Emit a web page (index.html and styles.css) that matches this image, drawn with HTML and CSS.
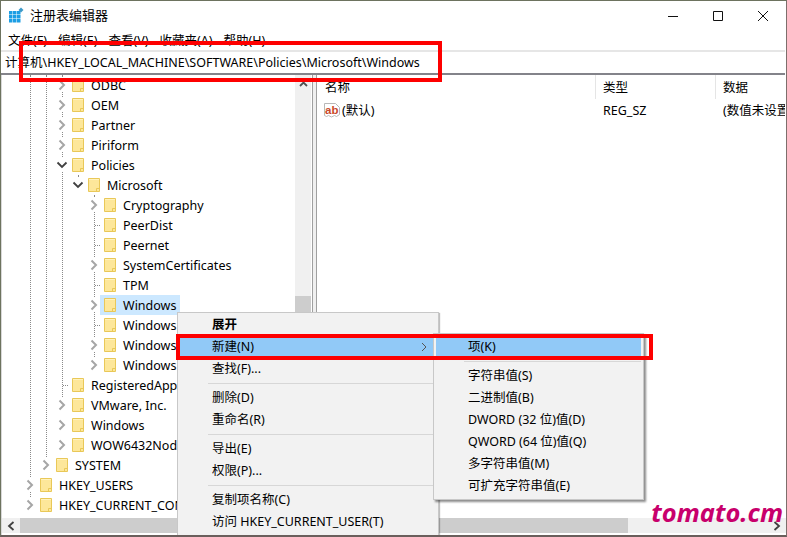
FILE: index.html
```html
<!DOCTYPE html>
<html lang="zh-CN">
<head>
<meta charset="utf-8">
<title>注册表编辑器</title>
<link rel="stylesheet" href="styles.css">
</head>
<body>
<svg class="sprite" aria-hidden="true">
  <symbol id="folder" viewBox="0 0 12 14">
    <path d="M.5.5h11v13H.5z" fill="#fde79a" stroke="#e9c858"/>
    <path d="M1 1h10v1H1z" fill="#fff2bd"/>
    <path d="M8.500 13.500v-3h3" fill="none" stroke="#e9c858"/>
  </symbol>
  <symbol id="closed" viewBox="0 0 8 12">
    <path d="M1.500 1.500 6 6l-4.500 4.500" fill="none" stroke="#a6a6a6" stroke-width="2"/>
  </symbol>
  <symbol id="open" viewBox="0 0 12 8">
    <path d="M1.500 1.500 6 6l4.500-4.500" fill="none" stroke="#404040" stroke-width="1.800"/>
  </symbol>
</svg>
<div class="window">
  <header class="titlebar">
    <svg class="appicon" width="16" height="16" viewBox="0 0 16 16">
      <path d="M1 4h3.500v3.500H1zM5 4h3.500v3.500H5zM9 4h3.500v3.500H9zM1 8h3.500v3.500H1zM5 8h3.500v3.500H5zM9 8h3.500v3.500H9zM1 12h3.500v3.500H1zM5 12h3.500v3.500H5zM9 12h3.500v3.500H9z" fill="#1c9ee4"/>
      <path d="M13 .5 15.500 3 13 5.500 10.500 3z" fill="#3d9ac9"/>
    </svg>
    <span class="title">注册表编辑器</span>
    <div class="controls">
      <span class="control"><svg width="10" height="10" viewBox="0 0 10 10"><path d="M0 5.500h10" stroke="#111"/></svg></span>
      <span class="control"><svg width="10" height="10" viewBox="0 0 10 10"><path d="M.5.500h9v9h-9z" fill="none" stroke="#111"/></svg></span>
      <span class="control"><svg width="10" height="10" viewBox="0 0 10 10"><path d="M0 0l10 10M10 0 0 10" stroke="#111"/></svg></span>
    </div>
  </header>
  <nav class="menubar">
    <span>文件(F)</span><span>编辑(E)</span><span>查看(V)</span><span>收藏夹(A)</span><span>帮助(H)</span>
  </nav>
  <div class="address">计算机\HKEY_LOCAL_MACHINE\SOFTWARE\Policies\Microsoft\Windows</div>
  <main class="panes">
    <section class="treepane">
      <div class="treebody">
        <div class="tree">
          <i class="vline v30"></i><i class="vline v46"></i><i class="vline v62"></i><i class="vline v78"></i><i class="vline v94"></i>
          <div class="row l2"><span class="tw"><svg width="8" height="12"><use href="#closed"/></svg></span><span class="item"><svg class="fd"><use href="#folder"/></svg>ODBC</span></div>
          <div class="row l2"><span class="tw"><svg width="8" height="12"><use href="#closed"/></svg></span><span class="item"><svg class="fd"><use href="#folder"/></svg>OEM</span></div>
          <div class="row l2"><span class="tw"><svg width="8" height="12"><use href="#closed"/></svg></span><span class="item"><svg class="fd"><use href="#folder"/></svg>Partner</span></div>
          <div class="row l2"><span class="tw"><svg width="8" height="12"><use href="#closed"/></svg></span><span class="item"><svg class="fd"><use href="#folder"/></svg>Piriform</span></div>
          <div class="row l2"><span class="tw"><svg width="12" height="8"><use href="#open"/></svg></span><span class="item"><svg class="fd"><use href="#folder"/></svg>Policies</span></div>
          <div class="row l3"><span class="tw"><svg width="12" height="8"><use href="#open"/></svg></span><span class="item"><svg class="fd"><use href="#folder"/></svg>Microsoft</span></div>
          <div class="row l4"><span class="tw"><svg width="8" height="12"><use href="#closed"/></svg></span><span class="item"><svg class="fd"><use href="#folder"/></svg>Cryptography</span></div>
          <div class="row l4"><span class="tw leaf"></span><span class="item"><svg class="fd"><use href="#folder"/></svg>PeerDist</span></div>
          <div class="row l4"><span class="tw leaf"></span><span class="item"><svg class="fd"><use href="#folder"/></svg>Peernet</span></div>
          <div class="row l4"><span class="tw"><svg width="8" height="12"><use href="#closed"/></svg></span><span class="item"><svg class="fd"><use href="#folder"/></svg>SystemCertificates</span></div>
          <div class="row l4"><span class="tw leaf"></span><span class="item"><svg class="fd"><use href="#folder"/></svg>TPM</span></div>
          <div class="row l4"><span class="tw"><svg width="8" height="12"><use href="#closed"/></svg></span><span class="item selected"><svg class="fd"><use href="#folder"/></svg>Windows</span></div>
          <div class="row l4"><span class="tw leaf"></span><span class="item"><svg class="fd"><use href="#folder"/></svg>Windows</span></div>
          <div class="row l4"><span class="tw"><svg width="8" height="12"><use href="#closed"/></svg></span><span class="item"><svg class="fd"><use href="#folder"/></svg>Windows</span></div>
          <div class="row l4"><span class="tw"><svg width="8" height="12"><use href="#closed"/></svg></span><span class="item"><svg class="fd"><use href="#folder"/></svg>Windows</span></div>
          <div class="row l2"><span class="tw leaf"></span><span class="item"><svg class="fd"><use href="#folder"/></svg>RegisteredApplications</span></div>
          <div class="row l2"><span class="tw"><svg width="8" height="12"><use href="#closed"/></svg></span><span class="item"><svg class="fd"><use href="#folder"/></svg>VMware, Inc.</span></div>
          <div class="row l2"><span class="tw"><svg width="8" height="12"><use href="#closed"/></svg></span><span class="item"><svg class="fd"><use href="#folder"/></svg>Windows</span></div>
          <div class="row l2"><span class="tw"><svg width="8" height="12"><use href="#closed"/></svg></span><span class="item"><svg class="fd"><use href="#folder"/></svg>WOW6432Node</span></div>
          <div class="row l1"><span class="tw"><svg width="8" height="12"><use href="#closed"/></svg></span><span class="item"><svg class="fd"><use href="#folder"/></svg>SYSTEM</span></div>
          <div class="row l0"><span class="tw"><svg width="8" height="12"><use href="#closed"/></svg></span><span class="item"><svg class="fd"><use href="#folder"/></svg>HKEY_USERS</span></div>
          <div class="row l0"><span class="tw"><svg width="8" height="12"><use href="#closed"/></svg></span><span class="item"><svg class="fd"><use href="#folder"/></svg>HKEY_CURRENT_CONFIG</span></div>
        </div>
        <div class="vscroll">
          <svg class="upbtn" width="9" height="6" viewBox="0 0 9 6"><path d="M1 5l3.500-3.500L8 5" fill="none" stroke="#505050" stroke-width="1.800"/></svg>
          <div class="vthumb"></div>
        </div>
      </div>
      <div class="hscroll hscroll-left">
        <span class="hbtn"><svg width="8" height="10" viewBox="0 0 8 10"><path d="M6.500 1 2 5l4.500 4" fill="none" stroke="#404040" stroke-width="1.800"/></svg></span>
        <div class="hthumb"></div>
      </div>
    </section>
    <div class="splitter"></div>
    <section class="listpane">
      <div class="listbody">
        <div class="listhead">
          <span class="col c-name">名称</span><span class="col c-type">类型</span><span class="col c-data">数据</span>
        </div>
        <div class="listrow">
          <span class="c-name valname">
            <svg class="abicon" width="16" height="15" viewBox="0 0 16 15"><path d="M.5.500h11l4 4v7l-3 2-2-1-3 1.500-3-1.500-2 1-2-1z" fill="#fff" stroke="#b8b8b8"/><text x="1" y="10.500" class="abtext">ab</text></svg>(默认)
          </span>
          <span class="c-type">REG_SZ</span>
          <span class="c-data">(数值未设置)</span>
        </div>
      </div>
      <div class="hscroll hscroll-right">
        <div class="hthumb"></div>
        <span class="hbtn hbtn-right"><svg width="8" height="10" viewBox="0 0 8 10"><path d="M1.500 1 6 5 1.500 9" fill="none" stroke="#404040" stroke-width="1.800"/></svg></span>
      </div>
    </section>
  </main>

  <div class="menu ctx">
    <div class="mi strong">展开</div>
    <div class="mi active">新建(N)<svg class="arrow" width="6" height="10" viewBox="0 0 6 10"><path d="M1 1l4 4-4 4" fill="none" stroke="#555"/></svg></div>
    <div class="mi">查找(F)...</div>
    <div class="sep"></div>
    <div class="mi">删除(D)</div>
    <div class="mi">重命名(R)</div>
    <div class="sep"></div>
    <div class="mi">导出(E)</div>
    <div class="mi">权限(P)...</div>
    <div class="sep"></div>
    <div class="mi">复制项名称(C)</div>
    <div class="mi">访问 HKEY_CURRENT_USER(T)</div>
  </div>
  <div class="menu sub">
    <div class="mi active">项(K)</div>
    <div class="sep"></div>
    <div class="mi">字符串值(S)</div>
    <div class="mi">二进制值(B)</div>
    <div class="mi">DWORD (32 位)值(D)</div>
    <div class="mi">QWORD (64 位)值(Q)</div>
    <div class="mi">多字符串值(M)</div>
    <div class="mi">可扩充字符串值(E)</div>
  </div>
  <div class="redbox box-address"></div>
  <div class="redbox box-new"></div>
  <div class="watermark">tomato.cm</div>
</div>
</body>
</html>
```
FILE: styles.css
```css
* { box-sizing: border-box; }
html, body { margin: 0; padding: 0; background: #fff; }
body { font-family: "Noto Sans", "Noto Sans CJK SC", sans-serif; font-size: 12.500px; color: #000; }
.sprite { position: absolute; width: 0; height: 0; }

.window {
  position: relative;
  width: 787px;
  height: 537px;
  overflow: hidden;
  display: flex;
  flex-direction: column;
  background: #fff;
  border-top: 1px solid #6d735f;
  border-left: 1px solid #6d735f;
  border-right: 1px solid #7d6f6c;
  border-bottom: 2px solid #6a5f5c;
}

.titlebar { height: 29px; display: flex; align-items: center; padding-left: 7px; flex: none; }
.appicon { flex: none; margin-top: -1px; }
.title { margin-left: 6px; font-size: 13px; line-height: 29px; }
.controls { margin-left: auto; display: flex; margin-right: 1px; }
.control { width: 45px; height: 29px; display: flex; align-items: center; justify-content: center; }

.menubar { height: 20px; flex: none; display: flex; gap: 11px; padding-left: 7px; font-size: 12.500px; line-height: 22px; }

.address {
  height: 25px;
  flex: none;
  margin-right: 1px;
  border-top: 2px solid #e6e6e6;
  border-bottom: 2px solid #83838a;
  padding-left: 4px;
  font-size: 12.500px;
  line-height: 21px;
  white-space: nowrap;
}

.panes { flex: 1; display: flex; min-height: 0; }
.treepane { width: 311px; flex: none; display: flex; flex-direction: column; border-left: 1px solid #d8d8d8; }
.treebody { flex: 1; display: flex; min-height: 0; }
.tree { position: relative; flex: 1; min-width: 0; overflow: hidden; }

.vline { position: absolute; top: 0; border-left: 1px dotted #8a8a8a; }
.v30 { left: 28px; height: 422px; }
.v46 { left: 44px; height: 382px; }
.v62 { left: 60px; height: 322px; }
.v78 { left: 76px; top: 100px; height: 8px; }
.v94 { left: 92px; top: 120px; height: 172px; }

.row { position: relative; height: 20px; display: flex; align-items: center; white-space: nowrap; line-height: 20px; }
.l0 { padding-left: 22px; }
.l1 { padding-left: 38px; }
.l2 { padding-left: 54px; }
.l3 { padding-left: 70px; }
.l4 { padding-left: 86px; }

.tw { width: 12px; height: 14px; flex: none; display: flex; align-items: center; justify-content: center; background: #fff; }
.tw.leaf { background: none; }
.tw.leaf::after { content: ""; width: 7px; margin-left: 7px; border-top: 1px dotted #8a8a8a; }
.item { display: flex; align-items: center; height: 20px; padding: 2px 4px 0 4px; }
.selected { background: #cce8ff; }
.fd { width: 12px; height: 14px; flex: none; margin: 0 7px 2px 0; }

.vscroll { width: 16px; flex: none; margin-right: 1px; background: #f0f0f0; padding-top: 6px; display: flex; flex-direction: column; align-items: center; }
.upbtn { flex: none; }
.vthumb { width: 16px; height: 40px; background: #cdcdcd; margin-top: 209px; }

.hscroll { height: 15px; flex: none; background: #f0f0f0; display: flex; margin-bottom: 2px; }
.hbtn { width: 18px; flex: none; display: flex; align-items: center; justify-content: center; }
.hscroll-left .hthumb { width: 200px; background: #cdcdcd; }
.hscroll-right .hthumb { width: 311px; background: #cdcdcd; }
.hbtn-right { margin-left: auto; }

.splitter { width: 5px; flex: none; border-left: 1px solid #a0a0a0; border-right: 1px solid #a0a0a0; background: #f0f0f0; }

.listpane { flex: 1; min-width: 0; display: flex; flex-direction: column; }
.listbody { flex: 1; min-height: 0; overflow: hidden; margin-right: 1px; }
.listhead { height: 24px; display: flex; align-items: center; line-height: 26px; }
.col { height: 24px; border-right: 1px solid #e5e5e5; }
.col:last-child { border-right: 0; }
.c-name { width: 279px; flex: none; padding-left: 8px; }
.c-type { width: 120px; flex: none; padding-left: 7px; }
.c-data { flex: none; padding-left: 7px; white-space: nowrap; }
.listrow { height: 22px; padding-top: 1px; display: flex; align-items: center; line-height: 24px; }
.valname { display: flex; align-items: center; padding-left: 7px; }
.abicon { flex: none; margin: -1px 2px 0 0; }
.abtext { font-family: "Liberation Sans", sans-serif; font-weight: 700; font-size: 11.500px; fill: #c9492a; }

.menu { position: absolute; background: #f2f2f2; border: 1px solid #c8c8c8; padding: 2px; }
.ctx { left: 176px; top: 311px; width: 262px; padding-top: 1px; box-shadow: 1px 1px 1px rgba(0,0,0,.25); }
.sub { left: 432px; top: 332px; width: 211px; box-shadow: 2px 2px 2px rgba(0,0,0,.45); }
.mi { position: relative; height: 22px; line-height: 22px; white-space: nowrap; }
.ctx .mi { padding-left: 32px; }
.sub .mi { padding-left: 32px; }
.strong { font-weight: 700; }
.active { background: #91c9f7; }
.arrow { position: absolute; right: 9px; top: 6px; }
.sep { height: 7px; display: flex; align-items: center; }
.sep::before { content: ""; flex: 1; border-top: 1px solid #d7d7d7; }
.ctx .sep { padding-left: 28px; }
.sub .sep { padding-left: 28px; }

.redbox { position: absolute; border: 4px solid #fe0000; }
.box-address { left: 18px; top: 40px; width: 423px; height: 41px; }
.box-new { left: 175px; top: 333px; width: 477px; height: 26px; }

.watermark {
  position: absolute;
  right: 3px;
  top: 494px;
  font-family: "Open Sans", sans-serif;
  font-size: 25.500px;
  font-weight: 700;
  font-style: italic;
  line-height: 34px;
  color: #c8006c;
}
```
